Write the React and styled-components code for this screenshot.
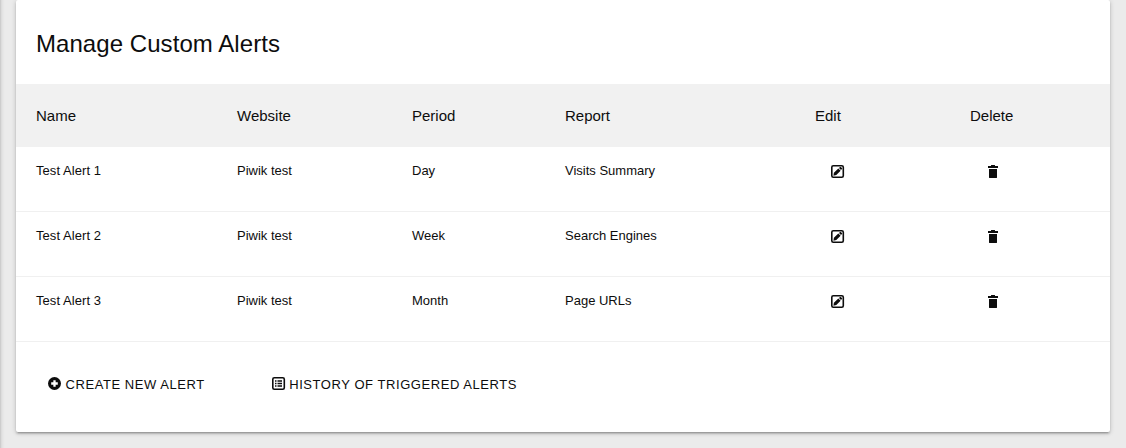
import React from "react";
import styled, { createGlobalStyle } from "styled-components";

const GlobalStyle = createGlobalStyle`
  * { box-sizing: border-box; }
  body {
    margin: 0;
    background: #ebebeb;
    color: #0d0d0d;
    font-family: "Liberation Sans", Arial, sans-serif;
    overflow: hidden;
  }
`;

const cardShadow =
  "0 2px 2px 0 rgba(0,0,0,.14), 0 3px 1px -2px rgba(0,0,0,.12), 0 1px 5px 0 rgba(0,0,0,.2)";

const Page = styled.div`
  display: flex;
  height: 448px;
`;

const SideEdge = styled.div`
  width: 10px;
  margin: -10px 16px -10px -10px;
  box-shadow: ${cardShadow};
`;

const Card = styled.main`
  width: 1094px;
  height: 432px;
  background: #fff;
  border-radius: 2px;
  box-shadow: ${cardShadow};
`;

const Title = styled.h2`
  margin: 0;
  height: 84px;
  padding: 28px 20px 0;
  font-size: 24px;
  line-height: 32px;
  font-weight: 400;
  letter-spacing: 0.06px;
`;

const Row = styled.div`
  display: grid;
  grid-template-columns: 201px 175px 153px 250px 155px 1fr;
  height: 65px;
  padding: 14px 20px 0;
  border-bottom: 1px solid #f0f0f0;
  font-size: 13px;
  line-height: 20px;
`;

const HeaderRow = styled(Row)`
  height: 63px;
  padding-top: 22px;
  border-bottom: 0;
  background: #f1f1f1;
  font-size: 15px;
`;

const NameCell = styled.div`
  letter-spacing: 0.06px;
`;

const ActionCell = styled.div`
  padding: 4px 0 0 ${(p) => p.$indent}px;
`;

const Icon = styled.svg`
  display: block;
  flex: none;
  width: 14px;
  height: 14px;
`;

const Actions = styled.div`
  display: flex;
  gap: 67px;
  padding: 33px 32px 0;
`;

const ActionLink = styled.a`
  display: flex;
  align-items: flex-start;
  gap: 3.5px;
  font-size: 13px;
  line-height: 20px;
  letter-spacing: 0.56px;
  text-transform: uppercase;
  white-space: nowrap;

  ${Icon} { margin-top: 2px; }
`;

const EditIcon = () => (
  <Icon viewBox="0 0 14 14">
    <rect x=".8" y=".8" width="11.5" height="11.5" rx="1.5" fill="none" stroke="#0d0d0d" strokeWidth="1.6" />
    <path d="M2.4 10.7l.5-2.9 4.4-4.3 2.3 2.3-4.3 4.3z M8 3l1-.9q.6-.4 1.1.1l.8.8q.5.5 0 1.1l-.9.9z" fill="#0d0d0d" />
  </Icon>
);

const DeleteIcon = () => (
  <Icon viewBox="0 0 14 14">
    <path d="M0 1h3V.2q0-.2.3-.2h3.4q.3 0 .3.2V1h3v2H0z M1 4h8v8.6q0 .4-.4.4H1.4q-.4 0-.4-.4z" fill="#0d0d0d" />
  </Icon>
);

const AddIcon = () => (
  <Icon viewBox="0 0 14 14">
    <circle cx="6.5" cy="6.5" r="6.5" fill="#0d0d0d" />
    <path d="M6.5 3.2v6.6M3.2 6.5h6.6" stroke="#fff" strokeWidth="2.3" />
  </Icon>
);

const HistoryIcon = () => (
  <Icon viewBox="0 0 14 14">
    <rect x=".8" y=".8" width="11.5" height="11.5" rx="1.5" fill="none" stroke="#0d0d0d" strokeWidth="1.6" />
    <path d="M3 4h1.5M3 6.5h1.5M3 9h1.5M5.5 4H10M5.5 6.5H10M5.5 9H10" stroke="#0d0d0d" strokeWidth="1.4" />
  </Icon>
);

const columns = ["Name", "Website", "Period", "Report", "Edit", "Delete"];

const alerts = [
  { name: "Test Alert 1", website: "Piwik test", period: "Day", report: "Visits Summary" },
  { name: "Test Alert 2", website: "Piwik test", period: "Week", report: "Search Engines" },
  { name: "Test Alert 3", website: "Piwik test", period: "Month", report: "Page URLs" },
];

export default function App() {
  return (
    <>
      <GlobalStyle />
      <Page>
        <SideEdge />
        <Card>
          <Title>Manage Custom Alerts</Title>
          <HeaderRow>
            {columns.map((label) => (
              <div key={label}>{label}</div>
            ))}
          </HeaderRow>
          {alerts.map((alert) => (
            <Row key={alert.name}>
              <NameCell>{alert.name}</NameCell>
              <div>{alert.website}</div>
              <div>{alert.period}</div>
              <div>{alert.report}</div>
              <ActionCell $indent={16}><EditIcon /></ActionCell>
              <ActionCell $indent={18}><DeleteIcon /></ActionCell>
            </Row>
          ))}
          <Actions>
            <ActionLink><AddIcon />Create new alert</ActionLink>
            <ActionLink><HistoryIcon />History of triggered alerts</ActionLink>
          </Actions>
        </Card>
      </Page>
    </>
  );
}
